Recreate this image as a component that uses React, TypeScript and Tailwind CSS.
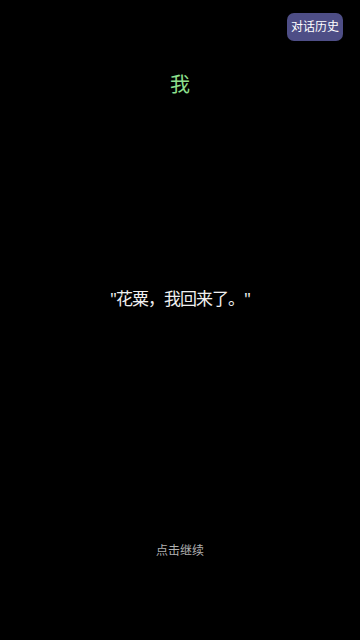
export default function App() {
  return (
    <div
      className="relative flex h-[640px] w-full flex-col items-center bg-black"
      style={{ fontFamily: '"Noto Sans", "Noto Sans CJK SC", sans-serif' }}
    >
      <button className="absolute right-[17px] top-[13px] h-[28px] w-[56px] rounded-[7px] bg-[#4e4e86] text-[12px] leading-[28px] text-white">
        对话历史
      </button>
      <div className="mt-[71px] text-[20px] leading-[28px] text-[#8ee08e]">我</div>
      <div className="mt-[187px] text-[17px] leading-[26px] tracking-[-1px] text-[#f0f0f0]">"花粟，我回来了。"</div>
      <div className="mt-[231px] text-[12px] leading-[16px] text-[#b0b0b0]">点击继续</div>
    </div>
  )
}
